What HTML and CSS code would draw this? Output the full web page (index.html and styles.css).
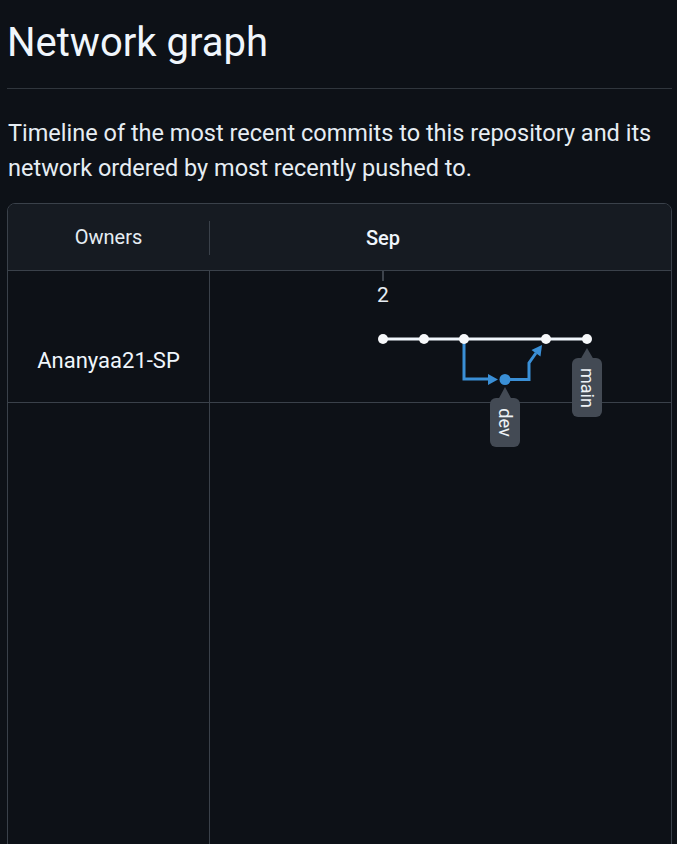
FILE: index.html
```html
<!DOCTYPE html>
<html lang="en">
<head>
<meta charset="utf-8">
<title>Network graph</title>
<link rel="stylesheet" href="styles.css">
</head>
<body>
<main class="page">
  <header class="subhead">
    <h1 class="subhead-title">Network graph</h1>
  </header>
  <p class="lead">Timeline of the most recent commits to this repository and its network ordered by most recently pushed to.</p>

  <section class="network">
    <div class="net-head">
      <div class="col-owners head-owners">Owners</div>
      <div class="col-graph head-month">Sep</div>
    </div>
    <div class="net-row">
      <div class="col-owners owner-name">Ananyaa21-SP</div>
      <div class="col-graph"></div>
    </div>
    <div class="net-row net-row-empty">
      <div class="col-owners"></div>
      <div class="col-graph"></div>
    </div>

    <svg class="net-canvas" viewBox="8 204 664 700" width="664" height="700" aria-label="Commit graph">
      <line x1="383" y1="271" x2="383" y2="281" class="tick"/>
      <text x="383" y="302" class="day">2</text>

      <line x1="383" y1="339" x2="587" y2="339" class="trunk"/>

      <path d="M464 339 V379 H490" class="branch"/>
      <polygon points="488,374 488,385 498,379.5" class="branch-fill"/>
      <path d="M505 379.5 H529 V363 L536 353" class="branch"/>
      <polygon points="542,345 540.5,356.5 531.5,350" class="branch-fill"/>

      <circle cx="383" cy="339" r="5" class="node"/>
      <circle cx="424" cy="339" r="5" class="node"/>
      <circle cx="464" cy="339" r="5" class="node"/>
      <circle cx="546" cy="339" r="5" class="node"/>
      <circle cx="587" cy="339" r="5" class="node"/>
      <circle cx="505" cy="379.5" r="5.5" class="node-blue"/>

      <g class="tag">
        <polygon points="505,387 498,400 512,400"/>
        <rect x="490" y="398" width="30" height="49" rx="6"/>
        <text transform="translate(505 422.5) rotate(90)" class="tag-text">dev</text>
      </g>
      <g class="tag">
        <polygon points="587,348 580,360 594,360"/>
        <rect x="572" y="358" width="30" height="59" rx="6"/>
        <text transform="translate(587 388) rotate(90)" class="tag-text">main</text>
      </g>
    </svg>
  </section>
</main>
</body>
</html>
```

FILE: styles.css
```css
html, body {
  margin: 0;
  padding: 0;
  background: #0d1117;
  color: #e6edf3;
  font-family: Roboto, "Noto Sans", "Liberation Sans", sans-serif;
  overflow: hidden;
}

.page {
  padding: 18px 5px 0 7px;
}

.subhead {
  border-bottom: 1px solid #30363d;
  padding-bottom: 20px;
}

.subhead-title {
  margin: 0;
  font-size: 40px;
  font-weight: 400;
  line-height: 50px;
  color: #f0f6fc;
}

.lead {
  margin: 27px 0 16px 1px;
  font-size: 23.5px;
  line-height: 35.25px;
  color: #e6edf3;
}

.network {
  position: relative;
  border: 1px solid #3a414a;
  border-radius: 8px;
  overflow: hidden;
  height: 700px;
}

.net-head {
  display: flex;
  height: 66px;
  background: #161b22;
  border-bottom: 1px solid #3a414a;
}

.net-row {
  display: flex;
  height: 131px;
  border-bottom: 1px solid #3a414a;
}

.net-row-empty {
  height: 600px;
  border-bottom: 0;
}

.col-owners {
  width: 202px;
  flex: none;
  border-right: 1px solid #3a414a;
  box-sizing: border-box;
  text-align: center;
}

.col-graph {
  flex: 1;
}

.head-owners {
  position: relative;
  border-right: 0;
  display: flex;
  align-items: center;
  justify-content: center;
  font-size: 20px;
  color: #e6edf3;
  padding-right: 1px;
}

.head-owners::after {
  content: "";
  position: absolute;
  right: 0;
  top: 17px;
  height: 34px;
  width: 1px;
  background: #3a414a;
}

.head-month {
  display: flex;
  align-items: center;
  padding-left: 156px;
  font-size: 20px;
  font-weight: 500;
  color: #f0f6fc;
  padding-top: 3px;
}

.owner-name {
  padding-top: 77px;
  font-size: 22px;
  line-height: 26px;
  color: #f0f6fc;
}

.net-canvas {
  position: absolute;
  left: 0;
  top: 0;
  font-family: Roboto, "Noto Sans", "Liberation Sans", sans-serif;
}

.tick {
  stroke: #6e7681;
  stroke-width: 1;
}

.day {
  fill: #e6edf3;
  font-size: 21px;
  text-anchor: middle;
}

.trunk {
  stroke: #f0f6fc;
  stroke-width: 3;
}

.node {
  fill: #f6f8fa;
}

.branch {
  fill: none;
  stroke: #3a8fd6;
  stroke-width: 3;
}

.branch-fill,
.node-blue {
  fill: #3a8fd6;
}

.tag polygon,
.tag rect {
  fill: #434a54;
}

.tag-text {
  fill: #eef2f6;
  font-size: 18px;
  text-anchor: middle;
  dominant-baseline: central;
}
```
